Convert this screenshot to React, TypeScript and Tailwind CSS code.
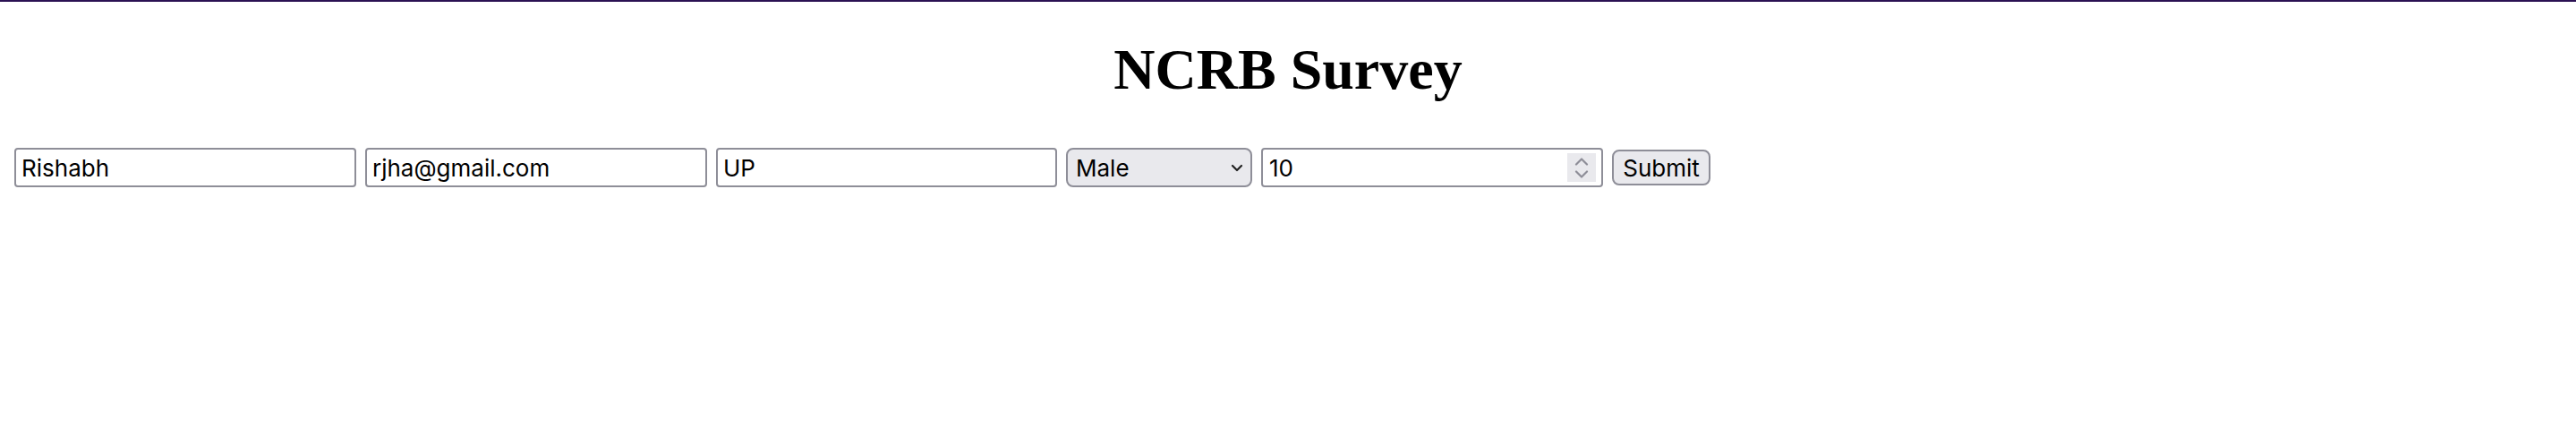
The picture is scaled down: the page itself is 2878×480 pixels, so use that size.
import React from "react";

const Chevron = () => (
  <svg width="14" height="9" viewBox="0 0 14 9" fill="none">
    <path d="M2 2l5 5 5-5" stroke="#222" strokeWidth="2.2" strokeLinecap="round" strokeLinejoin="round" />
  </svg>
);

const Spinner = () => (
  <div className="flex h-[32px] w-[32px] flex-col items-center justify-center gap-[5px] bg-[#e9e9ed]">
    <svg width="16" height="9" viewBox="0 0 16 9" fill="none">
      <path d="M2 7.5l6-6 6 6" stroke="#8e8e98" strokeWidth="2.2" strokeLinecap="round" strokeLinejoin="round" />
    </svg>
    <svg width="16" height="9" viewBox="0 0 16 9" fill="none">
      <path d="M2 1.5l6 6 6-6" stroke="#8e8e98" strokeWidth="2.2" strokeLinecap="round" strokeLinejoin="round" />
    </svg>
  </div>
);

export default function App() {
  const inputCls =
    "h-[44px] rounded-[4px] border-2 border-[#8e8e98] bg-white pl-[6px] text-[26px] text-black outline-none font-[Inter,'Noto_Sans',sans-serif]";

  return (
    <div className="min-h-[480px] w-full bg-white">
      <div className="h-[2px] w-full bg-[#2b1153]" />
      <h1 className="mt-[39px] text-center font-['Liberation_Serif','Times_New_Roman',serif] text-[64px] font-bold leading-[74px] text-black">
        NCRB Survey
      </h1>
      <form
        className="mt-[50px] flex items-center gap-[10px] px-[16px] font-[Inter,'Noto_Sans',sans-serif]"
        onSubmit={(e) => e.preventDefault()}
      >
        <input className={`${inputCls} w-[382px]`} defaultValue="Rishabh" />
        <input className={`${inputCls} w-[382px]`} defaultValue="rjha@gmail.com" />
        <input className={`${inputCls} w-[381px]`} defaultValue="UP" />
        <div className="flex h-[44px] w-[208px] items-center justify-between rounded-[8px] border-2 border-[#8e8e98] bg-[#e9e9ed] pl-[9px] pr-[8px] text-[26px] text-black">
          <span>Male</span>
          <Chevron />
        </div>
        <div className="flex h-[44px] w-[382px] items-center justify-between rounded-[4px] border-2 border-[#8e8e98] bg-white pl-[7px] pr-[6px]">
          <input
            className="w-[300px] bg-transparent font-[Inter,'Noto_Sans',sans-serif] text-[26px] text-black outline-none"
            defaultValue="10"
          />
          <Spinner />
        </div>
        <button
          type="submit"
          className="flex h-[40px] w-[110px] items-center justify-center rounded-[8px] border-2 border-[#8e8e98] bg-[#e9e9ed] font-[Inter,'Noto_Sans',sans-serif] text-[26px] text-black"
        >
          Submit
        </button>
      </form>
    </div>
  );
}
